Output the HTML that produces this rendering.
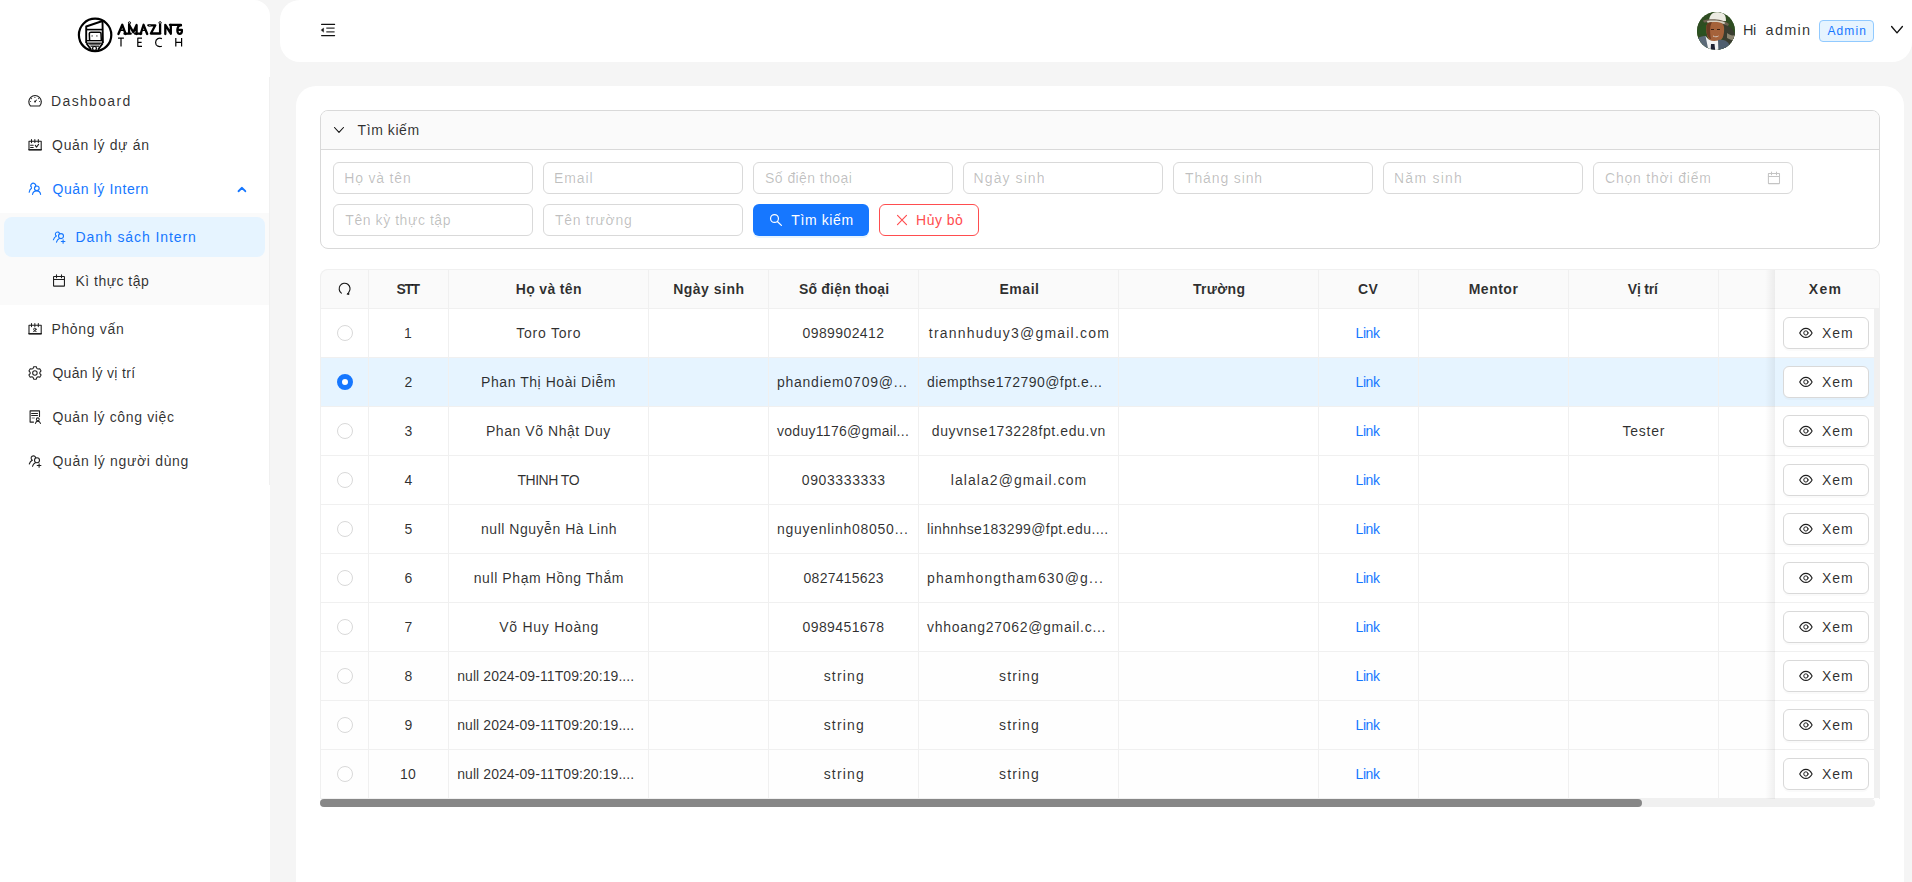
<!DOCTYPE html>
<html><head><meta charset="utf-8"><style>
*{box-sizing:border-box;margin:0;padding:0}
html,body{width:1912px;height:882px;overflow:hidden;background:#f5f5f5;font-family:"Liberation Sans",sans-serif;color:rgba(0,0,0,0.82);font-size:14px}
.abs{position:absolute}
.t{position:absolute;white-space:nowrap}
.vl{position:absolute;width:1px;background:#f0f0f0}
.hl{position:absolute;height:1px;background:#f0f0f0}
.inp{position:absolute;width:200px;height:32px;border:1px solid #d9d9d9;border-radius:6px;background:#fff}
.radio{position:absolute;left:337px;width:16px;height:16px;border-radius:50%;border:1px solid #d9d9d9;background:#fff}
.radio.on{border:5px solid #1677ff}
.xbtn{position:absolute;left:1783px;width:86px;height:32px;border:1px solid #d9d9d9;border-radius:6px;background:#fff;box-shadow:0 2px 0 rgba(0,0,0,0.02)}
</style></head><body>
<div class="abs" style="left:0;top:0;width:270px;height:882px;background:#fff;border-top-right-radius:16px"></div>
<div class="abs" style="left:269px;top:77px;width:1px;height:408px;background:#f0f0f0"></div>
<div class="abs" style="left:0;top:213px;width:269px;height:92px;background:#fafafa"></div>
<div class="abs" style="left:4px;top:217px;width:261px;height:40px;background:#e6f4ff;border-radius:8px"></div>
<svg class="abs" style="left:0;top:0" width="270" height="77" viewBox="0 0 270 77" fill="none" stroke="#000" stroke-linejoin="round">
<circle cx="95.1" cy="34.9" r="16.2" stroke-width="2.2"/>
<path d="M86.2 43 V26.5 L102.5 21 L102.9 43" stroke-width="1.9"/>
<path d="M86.2 29.6 H102.6" stroke-width="1.6"/>
<path d="M89.6 40.4 L89.3 33.6 C89.3 32.6 90 32.3 91 32.3 H99.6 C100.6 32.3 101 32.7 101 33.6 L101.3 40.4" stroke-width="1.5"/>
<circle cx="92.1" cy="35.9" r="0.6" fill="#000" stroke="none"/><circle cx="96.9" cy="35.9" r="0.6" fill="#000" stroke="none"/>
<path d="M86.6 40.7 H102.5 M86.6 43.1 H102.5" stroke-width="1.2"/>
<path d="M87 42 H102" stroke="#999" stroke-width="1.2"/>
<path d="M86.4 43.2 L91.2 49.8 M102.8 43.2 L98 49.8" stroke-width="1.8"/>
<path d="M89.3 44.1 H100.2 M90.5 46.1 H99" stroke-width="1.1"/>
<path d="M89.6 45.1 H99.8" stroke="#aaa" stroke-width="0.9"/>
<circle cx="94.5" cy="48.4" r="1.9" fill="#fff" stroke-width="1.2"/>
<g stroke-width="2.3" stroke-linecap="round">
<path d="M118.4 34 L122.3 24.8 L125.6 34"/>
<path d="M120.4 30.2 H124.2" stroke-width="1.4"/>
<path d="M124.5 33.7 H130.7 M129.1 33.7 V24.4"/>
<path d="M129.3 25.2 L133.3 32.3 L136.6 25 V34"/>
<path d="M135.1 33.7 H141.2"/>
<path d="M140.6 34 L143.6 24.8 L147.2 34"/>
<path d="M142.3 30.3 H145" stroke-width="1.2"/>
<path d="M148.3 25.3 H155.3 L150.9 33.5 H160.3 M160.1 33.7 V24.6"/>
<path d="M165.3 34 V24.8 L170.8 33.7 V24.8"/>
<path d="M169.9 24.8 H180.8"/>
<path d="M181 25.3 C176.6 24.9 176.4 33.9 179.4 33.9 C181.4 33.9 182.1 32.4 181.9 29.8 H179"/>
</g>
<circle cx="129.5" cy="22.8" r="1.05" fill="#fff" stroke-width="1"/>
<circle cx="160.1" cy="22.8" r="1.15" fill="#fff" stroke-width="1"/>
<circle cx="149.9" cy="25.4" r="0.9" fill="#fff" stroke-width="0.8"/>
<g stroke="#000" stroke-width="1.2" stroke-linecap="butt">
<path d="M118 38.1 H123.9 M121 38.1 V46.6"/>
<path d="M142 38.2 H137.8 V46.3 H142 M137.8 42.3 H141.6"/>
<path d="M161.9 38.6 C159.5 37.7 155.6 38.2 155.6 42.4 C155.6 46.6 159.5 47 161.9 46.2"/>
<path d="M175.8 38.1 V46.6 M181.6 38.1 V46.6 M175.8 42.3 H181.6"/>
</g>
</svg>
<svg class="abs" style="left:24px;top:90px" width="22" height="22" viewBox="0 0 22 22" fill="none" stroke-linecap="round" stroke-linejoin="round"><path d="M6.4 15.95 A6.25 6.25 0 1 1 15.74 15.95 Z" stroke="#1f1f1f" stroke-width="1.15"/><g fill="#1f1f1f"><circle cx="10.9" cy="7.4" r="0.55"/><circle cx="7.6" cy="8.6" r="0.55"/><circle cx="14.4" cy="8.6" r="0.55"/><circle cx="6.6" cy="11.5" r="0.55"/><circle cx="15.6" cy="11.5" r="0.55"/><circle cx="11.1" cy="11.5" r="0.95"/></g><path d="M11.1 11.5 L12.6 10.1" stroke="#1f1f1f" stroke-width="1"/></svg>
<svg class="abs" style="left:24px;top:134px" width="22" height="22" viewBox="0 0 22 22" fill="none" stroke-linecap="round" stroke-linejoin="round"><path d="M5.0 7.2 H17.2 V15.6 H5.0 Z" stroke="#1f1f1f" stroke-width="1.1"/><path d="M5 15.7 H17.2" stroke="#1f1f1f" stroke-width="1.5"/><path d="M7.5 5.4 V8.6 M10.85 5.6 V8.4 M14.3 5.4 V8.6 M6.6 11.2 H9.2 M6.6 13.4 H9.2 M11.3 11.4 L12.5 13.1 L14.6 10.4" stroke="#1f1f1f" stroke-width="1.05"/></svg>
<svg class="abs" style="left:24px;top:178px" width="22" height="22" viewBox="0 0 22 22" fill="none" stroke-linecap="round" stroke-linejoin="round"><path d="M11.3 9.0 A2.45 2.45 0 1 0 7.6 9.4" stroke="#1677ff" stroke-width="1.15"/><path d="M7.5 10.3 C6.3 11.1 5.4 12.5 5.2 14.2" stroke="#1677ff" stroke-width="1.15"/><circle cx="12.8" cy="10.3" r="2.35" stroke="#1677ff" stroke-width="1.15"/><path d="M8.5 16.4 C8.9 14.3 10.5 12.8 12.7 12.8 C14.9 12.8 16.3 14.3 16.6 16.4" stroke="#1677ff" stroke-width="1.15"/></svg>
<svg class="abs" style="left:49px;top:226px" width="22" height="22" viewBox="0 0 22 22" fill="none" stroke-linecap="round" stroke-linejoin="round"><path d="M10.6 7.6 A2.15 2.15 0 1 0 7.3 9.9" stroke="#1677ff" stroke-width="1.1"/><path d="M7.2 10.1 C6 11 4.9 12.3 4.4 13.8" stroke="#1677ff" stroke-width="1.1"/><circle cx="12.0" cy="10.1" r="2.5" stroke="#1677ff" stroke-width="1.1"/><path d="M10.4 12.6 C9 13.2 7.9 14.6 7.5 16.2" stroke="#1677ff" stroke-width="1.1"/><path d="M12.3 15.5 H15.9 M14.1 13.8 V17.2" stroke="#1677ff" stroke-width="1.1"/></svg>
<svg class="abs" style="left:49px;top:270px" width="22" height="22" viewBox="0 0 22 22" fill="none" stroke-linecap="round" stroke-linejoin="round"><rect x="4.55" y="6.5" width="10.9" height="9.65" rx="0.4" stroke="#1f1f1f" stroke-width="1.1"/><path d="M4.6 9.5 H15.4 M7.5 4.9 V7.7 M12.5 4.9 V7.7" stroke="#1f1f1f" stroke-width="1.1"/></svg>
<svg class="abs" style="left:24px;top:318px" width="22" height="22" viewBox="0 0 22 22" fill="none" stroke-linecap="round" stroke-linejoin="round"><path d="M5.0 7.2 H17.2 V15.6 H5.0 Z" stroke="#1f1f1f" stroke-width="1.1"/><path d="M5 15.7 H17.2" stroke="#1f1f1f" stroke-width="1.5"/><path d="M7.5 5.4 V8.6 M10.85 5.6 V8.4 M14.3 5.4 V8.6" stroke="#1f1f1f" stroke-width="1.05"/><circle cx="10.85" cy="11.3" r="1.2" stroke="#1f1f1f" stroke-width="0.95"/><path d="M9.3 13.7 C9.7 12.6 12 12.6 12.4 13.7" stroke="#1f1f1f" stroke-width="0.95"/></svg>
<svg class="abs" style="left:24px;top:362px" width="22" height="22" viewBox="0 0 22 22" fill="none" stroke-linecap="round" stroke-linejoin="round"><path d="M9.67 4.69 L12.33 4.69 L12.84 6.41 L14.02 7.09 L15.76 6.67 L17.09 8.97 L15.85 10.27 L15.85 11.63 L17.09 12.93 L15.76 15.23 L14.02 14.81 L12.84 15.49 L12.33 17.21 L9.67 17.21 L9.16 15.49 L7.98 14.81 L6.24 15.23 L4.91 12.93 L6.15 11.63 L6.15 10.27 L4.91 8.97 L6.24 6.67 L7.98 7.09 L9.16 6.41 Z" stroke="#1f1f1f" stroke-width="1.05"/><circle cx="10.9" cy="10.95" r="2.25" stroke="#1f1f1f" stroke-width="1.05"/></svg>
<svg class="abs" style="left:24px;top:406px" width="22" height="22" viewBox="0 0 22 22" fill="none" stroke-linecap="round" stroke-linejoin="round"><path d="M15.5 10.4 V4.9 H6.1 V16.1 H9.5" stroke="#1f1f1f" stroke-width="1.1"/><path d="M7.6 7.5 H13.5 M7.6 9.5 H13.5" stroke="#1f1f1f" stroke-width="1.05"/><path d="M8.1 12 H10.4" stroke="#777" stroke-width="1"/><circle cx="13.8" cy="13.3" r="1.45" stroke="#1f1f1f" stroke-width="1.05"/><path d="M11.4 17.4 C11.8 15.9 12.7 15.1 13.8 15.1 C14.9 15.1 15.9 15.9 16.5 17.4" stroke="#1f1f1f" stroke-width="1.05"/></svg>
<svg class="abs" style="left:24px;top:450px" width="22" height="22" viewBox="0 0 22 22" fill="none" stroke-linecap="round" stroke-linejoin="round"><path d="M11.6 7.8 A2.25 2.25 0 1 0 8.2 10.1" stroke="#1f1f1f" stroke-width="1.1"/><path d="M8.1 10.3 C6.9 11.1 5.8 12.4 5.3 14" stroke="#1f1f1f" stroke-width="1.1"/><circle cx="13.0" cy="10.2" r="2.5" stroke="#1f1f1f" stroke-width="1.1"/><path d="M11.4 12.7 C10 13.3 8.9 14.7 8.5 16.3" stroke="#1f1f1f" stroke-width="1.1"/><path d="M13.2 15.5 H16.9 M15.1 13.8 V17.2" stroke="#1f1f1f" stroke-width="1.1"/></svg>
<svg class="abs" style="left:231px;top:178px" width="22" height="22" viewBox="0 0 22 22" fill="none" stroke-linecap="round" stroke-linejoin="round"><path d="M7.5 13.2 L11 9.8 L14.3 13.2" stroke="#1677ff" stroke-width="1.9"/></svg>
<div class="abs" style="left:280px;top:0;width:1632px;height:62px;background:#fff;border-radius:20px 0 20px 20px"></div>
<svg class="abs" style="left:317px;top:19px" width="22" height="22" viewBox="0 0 22 22" fill="none" stroke-linecap="round" stroke-linejoin="round"><path d="M4.6 5.4 H17.6 M4.6 16.6 H17.6" stroke="#111" stroke-width="1.15"/><path d="M9.3 9.1 H17.6 M9.3 12.85 H17.6" stroke="#333" stroke-width="1.05" stroke-linecap="butt"/><path d="M4.2 10.9 L6.6 9.0 V12.9 Z" fill="#111" stroke="#111" stroke-width="0.4"/></svg>
<div class="abs" style="left:1697px;top:12px;width:38px;height:38px;border-radius:50%;overflow:hidden"><svg width="38" height="38" viewBox="3 3 38 38">
<rect x="0" y="0" width="44" height="44" fill="#3b5a2c"/>
<path d="M0 0 H44 V44 H0 Z" fill="#2f4d22"/>
<path d="M28 14 C34 16 40 20 42 28 L42 44 L30 44 Z" fill="#3a3d30"/>
<path d="M33 24 C36 26 38 27 41 26 L41 32 C37 31 35 30 33 29 Z" fill="#8a8470"/>
<path d="M4 20 C8 16 12 14 14 16 L12 26 C8 26 5 25 3 24 Z" fill="#2a5220"/>
<path d="M15 12 C15.5 6 18 3 24 3 C30 3 32 6 32 12 Z" fill="#ecebe2"/>
<path d="M9 11.5 C16 9.5 28 9.5 35 15 L34 17 C27 13.5 17 13 10 13.5 Z" fill="#6e6152"/>
<path d="M13 12 C18 11 27 11.5 31 13.5 L30.5 15 C26 13.5 18 13 13.5 13.8 Z" fill="#d8d2c4"/>
<path d="M12.5 17 C13 13.5 16 13 21 13 C26 13 29.5 14 30 18 C30.5 24 29.5 30 25 32.5 C21 34.5 16 33 14 29 C12.5 26 12 21 12.5 17 Z" fill="#a5623a"/>
<path d="M12.5 17 C13 14 15 13.3 18 13.2 C16 16 15.5 22 17 30 C15.5 30 14 28 13.2 26 C12.5 23 12.2 20 12.5 17 Z" fill="#6a3a22"/>
<path d="M17 20.5 H20 M23 20.5 H26" stroke="#3a2013" stroke-width="1"/>
<path d="M19 27 C21 28 23 28 24.5 27" stroke="#e8d0c0" stroke-width="1"/>
<path d="M3 44 V30 C6 27 10 27 12 27 L16 44 Z" fill="#5b6a78"/>
<path d="M24 31 C28 30 33 31 35 35 L36 44 H24 Z" fill="#4f5e6e"/>
<path d="M11.5 27 C14 31 18 33 24 31.5 L24.5 44 H15 Z" fill="#f2f2f2"/>
<path d="M17 35 L20.5 35 L21.5 44 H16.5 Z" fill="#1e2233"/>
</svg></div>
<div class="abs" style="left:1819px;top:20px;width:55px;height:22px;border:1px solid #91caff;background:#e6f4ff;border-radius:4px"></div>
<svg class="abs" style="left:1886px;top:19px" width="22" height="22" viewBox="0 0 22 22" fill="none" stroke-linecap="round" stroke-linejoin="round"><path d="M5.6 7.5 L11 13.9 L16.4 7.5" stroke="#111" stroke-width="1.35"/></svg>
<div class="abs" style="left:296px;top:86px;width:1608px;height:830px;background:#fff;border-radius:20px"></div>
<div class="abs" style="left:320px;top:110px;width:1560px;height:139px;border:1px solid #d9d9d9;border-radius:8px;overflow:hidden"><div class="abs" style="left:0;top:0;width:1558px;height:39px;background:#fafafa;border-bottom:1px solid #d9d9d9"></div></div>
<svg class="abs" style="left:328px;top:119px" width="22" height="22" viewBox="0 0 22 22" fill="none" stroke-linecap="round" stroke-linejoin="round"><path d="M6.5 8.5 L11 13.4 L15.5 8.5" stroke="#111" stroke-width="1.1"/></svg>
<div class="inp" style="left:333px;top:162px"></div>
<div class="inp" style="left:543px;top:162px"></div>
<div class="inp" style="left:753px;top:162px"></div>
<div class="inp" style="left:963px;top:162px"></div>
<div class="inp" style="left:1173px;top:162px"></div>
<div class="inp" style="left:1383px;top:162px"></div>
<div class="inp" style="left:1593px;top:162px"></div>
<div class="inp" style="left:333px;top:204px"></div>
<div class="inp" style="left:543px;top:204px"></div>
<svg class="abs" style="left:1763px;top:167px" width="22" height="22" viewBox="0 0 22 22" fill="none" stroke-linecap="round" stroke-linejoin="round"><rect x="5.4" y="6.4" width="11.1" height="10.2" rx="0.3" stroke="#c4c4c4" stroke-width="1.05"/><path d="M5.4 9.5 H16.5 M8.5 4.9 V7.7 M13.5 4.9 V7.7" stroke="#c4c4c4" stroke-width="1.05"/></svg>
<div class="abs" style="left:753px;top:204px;width:116px;height:32px;border-radius:6px;background:#1677ff;box-shadow:0 2px 0 rgba(5,145,255,0.1)"></div>
<svg class="abs" style="left:764px;top:209px" width="22" height="22" viewBox="0 0 22 22" fill="none" stroke-linecap="round" stroke-linejoin="round"><circle cx="10.5" cy="9.5" r="3.95" stroke="#fff" stroke-width="1.2"/><path d="M13.6 12.7 L17.4 16.4" stroke="#fff" stroke-width="1.25"/></svg>
<div class="abs" style="left:879px;top:204px;width:100px;height:32px;border-radius:6px;border:1px solid #ff4d4f;background:#fff"></div>
<svg class="abs" style="left:890px;top:209px" width="22" height="22" viewBox="0 0 22 22" fill="none" stroke-linecap="round" stroke-linejoin="round"><path d="M7.5 6.4 L16.5 15.6 M16.5 6.4 L7.5 15.6" stroke="#ff4d4f" stroke-width="1.15"/></svg>
<div class="abs" style="left:320px;top:269px;width:1560px;height:40px;background:#fafafa;border-radius:8px 8px 0 0"></div>
<div class="abs" style="left:320px;top:358px;width:1554px;height:49px;background:#e6f4ff"></div>
<div class="abs" style="left:320px;top:652px;width:1554px;height:146px;background:#fefefe"></div>
<svg class="abs" style="left:333px;top:278px" width="22" height="22" viewBox="0 0 22 22" fill="none" stroke-linecap="round" stroke-linejoin="round"><path d="M8.4 15.1 A5.45 5.45 0 1 1 16.0 13.9" stroke="#111" stroke-width="1.1"/><path d="M14.2 15.9 L15.6 14.3 L15.9 16.2 Z" fill="#111" stroke="#111" stroke-width="0.8"/></svg>
<div class="vl" style="left:368px;top:269px;height:530px"></div>
<div class="vl" style="left:448px;top:269px;height:530px"></div>
<div class="vl" style="left:648px;top:269px;height:530px"></div>
<div class="vl" style="left:768px;top:269px;height:530px"></div>
<div class="vl" style="left:918px;top:269px;height:530px"></div>
<div class="vl" style="left:1118px;top:269px;height:530px"></div>
<div class="vl" style="left:1318px;top:269px;height:530px"></div>
<div class="vl" style="left:1418px;top:269px;height:530px"></div>
<div class="vl" style="left:1568px;top:269px;height:530px"></div>
<div class="vl" style="left:1718px;top:269px;height:530px"></div>
<div class="hl" style="left:320px;top:308px;width:1560px"></div>
<div class="hl" style="left:320px;top:357px;width:1554px"></div>
<div class="hl" style="left:320px;top:406px;width:1554px"></div>
<div class="hl" style="left:320px;top:455px;width:1554px"></div>
<div class="hl" style="left:320px;top:504px;width:1554px"></div>
<div class="hl" style="left:320px;top:553px;width:1554px"></div>
<div class="hl" style="left:320px;top:602px;width:1554px"></div>
<div class="hl" style="left:320px;top:651px;width:1554px"></div>
<div class="hl" style="left:320px;top:700px;width:1554px"></div>
<div class="hl" style="left:320px;top:749px;width:1554px"></div>
<div class="hl" style="left:320px;top:798px;width:1554px"></div>
<div class="radio" style="top:325px"></div>
<div class="radio on" style="top:374px"></div>
<div class="radio" style="top:423px"></div>
<div class="radio" style="top:472px"></div>
<div class="radio" style="top:521px"></div>
<div class="radio" style="top:570px"></div>
<div class="radio" style="top:619px"></div>
<div class="radio" style="top:668px"></div>
<div class="radio" style="top:717px"></div>
<div class="radio" style="top:766px"></div>
<div class="abs" style="left:1765px;top:269px;width:10px;height:530px;background:linear-gradient(to left,rgba(5,5,5,0.06),rgba(5,5,5,0))"></div>
<div class="abs" style="left:1775px;top:269px;width:105px;height:40px;background:#fafafa;border-top-right-radius:8px"></div>
<div class="hl" style="left:1775px;top:308px;width:105px"></div>
<div class="abs" style="left:1775px;top:309px;width:99px;height:48px;background:#fff"></div>
<div class="hl" style="left:1775px;top:357px;width:99px"></div>
<div class="xbtn" style="top:317px"></div>
<svg class="abs" style="left:1795px;top:322px" width="22" height="22" viewBox="0 0 22 22" fill="none" stroke-linecap="round" stroke-linejoin="round"><path d="M4.7 10.95 C6.4 7.6 8.6 6.35 10.9 6.35 C13.2 6.35 15.4 7.6 17.1 10.95 C15.4 14.3 13.2 15.4 10.9 15.4 C8.6 15.4 6.4 14.3 4.7 10.95 Z" stroke="#1f1f1f" stroke-width="1.1"/><circle cx="10.9" cy="10.95" r="2.15" stroke="#1f1f1f" stroke-width="1.0"/></svg>
<div class="abs" style="left:1775px;top:358px;width:99px;height:48px;background:#e6f4ff"></div>
<div class="hl" style="left:1775px;top:406px;width:99px"></div>
<div class="xbtn" style="top:366px"></div>
<svg class="abs" style="left:1795px;top:371px" width="22" height="22" viewBox="0 0 22 22" fill="none" stroke-linecap="round" stroke-linejoin="round"><path d="M4.7 10.95 C6.4 7.6 8.6 6.35 10.9 6.35 C13.2 6.35 15.4 7.6 17.1 10.95 C15.4 14.3 13.2 15.4 10.9 15.4 C8.6 15.4 6.4 14.3 4.7 10.95 Z" stroke="#1f1f1f" stroke-width="1.1"/><circle cx="10.9" cy="10.95" r="2.15" stroke="#1f1f1f" stroke-width="1.0"/></svg>
<div class="abs" style="left:1775px;top:407px;width:99px;height:48px;background:#fff"></div>
<div class="hl" style="left:1775px;top:455px;width:99px"></div>
<div class="xbtn" style="top:415px"></div>
<svg class="abs" style="left:1795px;top:420px" width="22" height="22" viewBox="0 0 22 22" fill="none" stroke-linecap="round" stroke-linejoin="round"><path d="M4.7 10.95 C6.4 7.6 8.6 6.35 10.9 6.35 C13.2 6.35 15.4 7.6 17.1 10.95 C15.4 14.3 13.2 15.4 10.9 15.4 C8.6 15.4 6.4 14.3 4.7 10.95 Z" stroke="#1f1f1f" stroke-width="1.1"/><circle cx="10.9" cy="10.95" r="2.15" stroke="#1f1f1f" stroke-width="1.0"/></svg>
<div class="abs" style="left:1775px;top:456px;width:99px;height:48px;background:#fff"></div>
<div class="hl" style="left:1775px;top:504px;width:99px"></div>
<div class="xbtn" style="top:464px"></div>
<svg class="abs" style="left:1795px;top:469px" width="22" height="22" viewBox="0 0 22 22" fill="none" stroke-linecap="round" stroke-linejoin="round"><path d="M4.7 10.95 C6.4 7.6 8.6 6.35 10.9 6.35 C13.2 6.35 15.4 7.6 17.1 10.95 C15.4 14.3 13.2 15.4 10.9 15.4 C8.6 15.4 6.4 14.3 4.7 10.95 Z" stroke="#1f1f1f" stroke-width="1.1"/><circle cx="10.9" cy="10.95" r="2.15" stroke="#1f1f1f" stroke-width="1.0"/></svg>
<div class="abs" style="left:1775px;top:505px;width:99px;height:48px;background:#fff"></div>
<div class="hl" style="left:1775px;top:553px;width:99px"></div>
<div class="xbtn" style="top:513px"></div>
<svg class="abs" style="left:1795px;top:518px" width="22" height="22" viewBox="0 0 22 22" fill="none" stroke-linecap="round" stroke-linejoin="round"><path d="M4.7 10.95 C6.4 7.6 8.6 6.35 10.9 6.35 C13.2 6.35 15.4 7.6 17.1 10.95 C15.4 14.3 13.2 15.4 10.9 15.4 C8.6 15.4 6.4 14.3 4.7 10.95 Z" stroke="#1f1f1f" stroke-width="1.1"/><circle cx="10.9" cy="10.95" r="2.15" stroke="#1f1f1f" stroke-width="1.0"/></svg>
<div class="abs" style="left:1775px;top:554px;width:99px;height:48px;background:#fff"></div>
<div class="hl" style="left:1775px;top:602px;width:99px"></div>
<div class="xbtn" style="top:562px"></div>
<svg class="abs" style="left:1795px;top:567px" width="22" height="22" viewBox="0 0 22 22" fill="none" stroke-linecap="round" stroke-linejoin="round"><path d="M4.7 10.95 C6.4 7.6 8.6 6.35 10.9 6.35 C13.2 6.35 15.4 7.6 17.1 10.95 C15.4 14.3 13.2 15.4 10.9 15.4 C8.6 15.4 6.4 14.3 4.7 10.95 Z" stroke="#1f1f1f" stroke-width="1.1"/><circle cx="10.9" cy="10.95" r="2.15" stroke="#1f1f1f" stroke-width="1.0"/></svg>
<div class="abs" style="left:1775px;top:603px;width:99px;height:48px;background:#fff"></div>
<div class="hl" style="left:1775px;top:651px;width:99px"></div>
<div class="xbtn" style="top:611px"></div>
<svg class="abs" style="left:1795px;top:616px" width="22" height="22" viewBox="0 0 22 22" fill="none" stroke-linecap="round" stroke-linejoin="round"><path d="M4.7 10.95 C6.4 7.6 8.6 6.35 10.9 6.35 C13.2 6.35 15.4 7.6 17.1 10.95 C15.4 14.3 13.2 15.4 10.9 15.4 C8.6 15.4 6.4 14.3 4.7 10.95 Z" stroke="#1f1f1f" stroke-width="1.1"/><circle cx="10.9" cy="10.95" r="2.15" stroke="#1f1f1f" stroke-width="1.0"/></svg>
<div class="abs" style="left:1775px;top:652px;width:99px;height:48px;background:#fff"></div>
<div class="hl" style="left:1775px;top:700px;width:99px"></div>
<div class="xbtn" style="top:660px"></div>
<svg class="abs" style="left:1795px;top:665px" width="22" height="22" viewBox="0 0 22 22" fill="none" stroke-linecap="round" stroke-linejoin="round"><path d="M4.7 10.95 C6.4 7.6 8.6 6.35 10.9 6.35 C13.2 6.35 15.4 7.6 17.1 10.95 C15.4 14.3 13.2 15.4 10.9 15.4 C8.6 15.4 6.4 14.3 4.7 10.95 Z" stroke="#1f1f1f" stroke-width="1.1"/><circle cx="10.9" cy="10.95" r="2.15" stroke="#1f1f1f" stroke-width="1.0"/></svg>
<div class="abs" style="left:1775px;top:701px;width:99px;height:48px;background:#fff"></div>
<div class="hl" style="left:1775px;top:749px;width:99px"></div>
<div class="xbtn" style="top:709px"></div>
<svg class="abs" style="left:1795px;top:714px" width="22" height="22" viewBox="0 0 22 22" fill="none" stroke-linecap="round" stroke-linejoin="round"><path d="M4.7 10.95 C6.4 7.6 8.6 6.35 10.9 6.35 C13.2 6.35 15.4 7.6 17.1 10.95 C15.4 14.3 13.2 15.4 10.9 15.4 C8.6 15.4 6.4 14.3 4.7 10.95 Z" stroke="#1f1f1f" stroke-width="1.1"/><circle cx="10.9" cy="10.95" r="2.15" stroke="#1f1f1f" stroke-width="1.0"/></svg>
<div class="abs" style="left:1775px;top:750px;width:99px;height:48px;background:#fff"></div>
<div class="hl" style="left:1775px;top:798px;width:99px"></div>
<div class="xbtn" style="top:758px"></div>
<svg class="abs" style="left:1795px;top:763px" width="22" height="22" viewBox="0 0 22 22" fill="none" stroke-linecap="round" stroke-linejoin="round"><path d="M4.7 10.95 C6.4 7.6 8.6 6.35 10.9 6.35 C13.2 6.35 15.4 7.6 17.1 10.95 C15.4 14.3 13.2 15.4 10.9 15.4 C8.6 15.4 6.4 14.3 4.7 10.95 Z" stroke="#1f1f1f" stroke-width="1.1"/><circle cx="10.9" cy="10.95" r="2.15" stroke="#1f1f1f" stroke-width="1.0"/></svg>
<div class="abs" style="left:1874px;top:309px;width:6px;height:489px;background:#f0f0f0"></div>
<div class="abs" style="left:320px;top:269px;width:1560px;height:530px;border-top:1px solid #f0f0f0;border-left:1px solid #f0f0f0;border-right:1px solid #f0f0f0;border-radius:8px 8px 0 0"></div>
<div class="abs" style="left:320px;top:799px;width:1555px;height:8px;background:#f0f0f0;border-radius:4px"></div>
<div class="abs" style="left:320px;top:799px;width:1322px;height:8px;background:#878787;border-radius:4px"></div>
<span class="t" style="left:51.10px;top:94.15px;font-size:14px;line-height:14px;letter-spacing:1.337px">Dashboard</span>
<span class="t" style="left:52.10px;top:138.15px;font-size:14px;line-height:14px;letter-spacing:0.677px">Quản lý dự án</span>
<span class="t" style="left:52.40px;top:182.15px;font-size:14px;line-height:14px;letter-spacing:0.619px;color:#1677ff">Quản lý Intern</span>
<span class="t" style="left:75.50px;top:230.15px;font-size:14px;line-height:14px;letter-spacing:0.911px;color:#1677ff">Danh sách Intern</span>
<span class="t" style="left:75.50px;top:274.15px;font-size:14px;line-height:14px;letter-spacing:0.477px">Kì thực tập</span>
<span class="t" style="left:51.40px;top:322.15px;font-size:14px;line-height:14px;letter-spacing:0.680px">Phỏng vấn</span>
<span class="t" style="left:52.40px;top:366.15px;font-size:14px;line-height:14px;letter-spacing:0.316px">Quản lý vị trí</span>
<span class="t" style="left:52.40px;top:410.15px;font-size:14px;line-height:14px;letter-spacing:0.645px">Quản lý công việc</span>
<span class="t" style="left:52.40px;top:454.15px;font-size:14px;line-height:14px;letter-spacing:0.681px">Quản lý người dùng</span>
<span class="t" style="left:1743.00px;top:22.83px;font-size:14.5px;line-height:14.5px;letter-spacing:-0.471px">Hi</span>
<span class="t" style="left:1765.60px;top:22.83px;font-size:14.5px;line-height:14.5px;letter-spacing:1.243px">admin</span>
<span class="t" style="left:1827.50px;top:24.94px;font-size:12px;line-height:12px;letter-spacing:1.090px;color:#1677ff">Admin</span>
<span class="t" style="left:357.60px;top:123.15px;font-size:14px;line-height:14px;letter-spacing:0.559px">Tìm kiếm</span>
<span class="t" style="left:344.30px;top:171.15px;font-size:14px;line-height:14px;letter-spacing:0.808px;color:rgba(0,0,0,0.25)">Họ và tên</span>
<span class="t" style="left:554.00px;top:171.15px;font-size:14px;line-height:14px;letter-spacing:0.876px;color:rgba(0,0,0,0.25)">Email</span>
<span class="t" style="left:765.10px;top:171.15px;font-size:14px;line-height:14px;letter-spacing:0.423px;color:rgba(0,0,0,0.25)">Số điện thoại</span>
<span class="t" style="left:973.60px;top:171.15px;font-size:14px;line-height:14px;letter-spacing:1.079px;color:rgba(0,0,0,0.25)">Ngày sinh</span>
<span class="t" style="left:1185.00px;top:171.15px;font-size:14px;line-height:14px;letter-spacing:0.869px;color:rgba(0,0,0,0.25)">Tháng sinh</span>
<span class="t" style="left:1394.00px;top:171.15px;font-size:14px;line-height:14px;letter-spacing:1.251px;color:rgba(0,0,0,0.25)">Năm sinh</span>
<span class="t" style="left:1605.00px;top:171.15px;font-size:14px;line-height:14px;letter-spacing:0.793px;color:rgba(0,0,0,0.25)">Chọn thời điểm</span>
<span class="t" style="left:345.30px;top:213.15px;font-size:14px;line-height:14px;letter-spacing:0.563px;color:rgba(0,0,0,0.25)">Tên kỳ thực tập</span>
<span class="t" style="left:555.00px;top:213.15px;font-size:14px;line-height:14px;letter-spacing:0.666px;color:rgba(0,0,0,0.25)">Tên trường</span>
<span class="t" style="left:791.30px;top:213.15px;font-size:14px;line-height:14px;letter-spacing:0.616px;color:#fff">Tìm kiếm</span>
<span class="t" style="left:916.10px;top:213.15px;font-size:14px;line-height:14px;letter-spacing:0.466px;color:#ff4d4f">Hủy bỏ</span>
<span class="t" style="left:396.60px;top:282.15px;font-size:14px;line-height:14px;letter-spacing:-1.545px;font-weight:bold">STT</span>
<span class="t" style="left:515.70px;top:282.15px;font-size:14px;line-height:14px;letter-spacing:0.355px;font-weight:bold">Họ và tên</span>
<span class="t" style="left:673.20px;top:282.15px;font-size:14px;line-height:14px;letter-spacing:0.494px;font-weight:bold">Ngày sinh</span>
<span class="t" style="left:799.00px;top:282.15px;font-size:14px;line-height:14px;letter-spacing:0.192px;font-weight:bold">Số điện thoại</span>
<span class="t" style="left:999.50px;top:282.15px;font-size:14px;line-height:14px;letter-spacing:0.535px;font-weight:bold">Email</span>
<span class="t" style="left:1192.90px;top:282.15px;font-size:14px;line-height:14px;letter-spacing:0.326px;font-weight:bold">Trường</span>
<span class="t" style="left:1358.00px;top:282.15px;font-size:14px;line-height:14px;letter-spacing:0.490px;font-weight:bold">CV</span>
<span class="t" style="left:1468.70px;top:282.15px;font-size:14px;line-height:14px;letter-spacing:0.497px;font-weight:bold">Mentor</span>
<span class="t" style="left:1627.80px;top:282.15px;font-size:14px;line-height:14px;letter-spacing:-0.186px;font-weight:bold">Vị trí</span>
<span class="t" style="left:1808.80px;top:282.15px;font-size:14px;line-height:14px;letter-spacing:1.338px;font-weight:bold">Xem</span>
<span class="t" style="left:404.00px;top:325.95px;font-size:14px;line-height:14px">1</span>
<span class="t" style="left:516.20px;top:325.95px;font-size:14px;line-height:14px;letter-spacing:0.778px">Toro Toro</span>
<span class="t" style="left:802.50px;top:325.95px;font-size:14px;line-height:14px;letter-spacing:0.403px">0989902412</span>
<span class="t" style="left:928.80px;top:325.95px;font-size:14px;line-height:14px;letter-spacing:1.211px">trannhuduy3@gmail.com</span>
<span class="t" style="left:1355.50px;top:325.95px;font-size:14px;line-height:14px;letter-spacing:-0.394px;color:#1677ff">Link</span>
<span class="t" style="left:1821.90px;top:325.95px;font-size:14px;line-height:14px;letter-spacing:0.938px">Xem</span>
<span class="t" style="left:404.50px;top:374.95px;font-size:14px;line-height:14px">2</span>
<span class="t" style="left:481.10px;top:374.95px;font-size:14px;line-height:14px;letter-spacing:0.546px">Phan Thị Hoài Diễm</span>
<span class="t" style="left:776.90px;top:374.95px;font-size:14px;line-height:14px;letter-spacing:0.772px">phandiem0709@...</span>
<span class="t" style="left:927.00px;top:374.95px;font-size:14px;line-height:14px;letter-spacing:0.455px">diempthse172790@fpt.e...</span>
<span class="t" style="left:1355.50px;top:374.95px;font-size:14px;line-height:14px;letter-spacing:-0.394px;color:#1677ff">Link</span>
<span class="t" style="left:1821.90px;top:374.95px;font-size:14px;line-height:14px;letter-spacing:0.938px">Xem</span>
<span class="t" style="left:404.50px;top:423.95px;font-size:14px;line-height:14px">3</span>
<span class="t" style="left:485.90px;top:423.95px;font-size:14px;line-height:14px;letter-spacing:0.563px">Phan Võ Nhật Duy</span>
<span class="t" style="left:776.90px;top:423.95px;font-size:14px;line-height:14px;letter-spacing:0.305px">voduy1176@gmail...</span>
<span class="t" style="left:931.80px;top:423.95px;font-size:14px;line-height:14px;letter-spacing:0.602px">duyvnse173228fpt.edu.vn</span>
<span class="t" style="left:1355.50px;top:423.95px;font-size:14px;line-height:14px;letter-spacing:-0.394px;color:#1677ff">Link</span>
<span class="t" style="left:1622.50px;top:423.95px;font-size:14px;line-height:14px;letter-spacing:0.768px">Tester</span>
<span class="t" style="left:1821.90px;top:423.95px;font-size:14px;line-height:14px;letter-spacing:0.938px">Xem</span>
<span class="t" style="left:404.50px;top:472.95px;font-size:14px;line-height:14px">4</span>
<span class="t" style="left:517.60px;top:472.95px;font-size:14px;line-height:14px;letter-spacing:-0.523px">THINH TO</span>
<span class="t" style="left:801.80px;top:472.95px;font-size:14px;line-height:14px;letter-spacing:0.603px">0903333333</span>
<span class="t" style="left:950.80px;top:472.95px;font-size:14px;line-height:14px;letter-spacing:1.061px">lalala2@gmail.com</span>
<span class="t" style="left:1355.50px;top:472.95px;font-size:14px;line-height:14px;letter-spacing:-0.394px;color:#1677ff">Link</span>
<span class="t" style="left:1821.90px;top:472.95px;font-size:14px;line-height:14px;letter-spacing:0.938px">Xem</span>
<span class="t" style="left:404.50px;top:521.95px;font-size:14px;line-height:14px">5</span>
<span class="t" style="left:481.00px;top:521.95px;font-size:14px;line-height:14px;letter-spacing:0.528px">null Nguyễn Hà Linh</span>
<span class="t" style="left:776.90px;top:521.95px;font-size:14px;line-height:14px;letter-spacing:0.739px">nguyenlinh08050...</span>
<span class="t" style="left:927.00px;top:521.95px;font-size:14px;line-height:14px;letter-spacing:0.386px">linhnhse183299@fpt.edu....</span>
<span class="t" style="left:1355.50px;top:521.95px;font-size:14px;line-height:14px;letter-spacing:-0.394px;color:#1677ff">Link</span>
<span class="t" style="left:1821.90px;top:521.95px;font-size:14px;line-height:14px;letter-spacing:0.938px">Xem</span>
<span class="t" style="left:404.50px;top:570.95px;font-size:14px;line-height:14px">6</span>
<span class="t" style="left:473.70px;top:570.95px;font-size:14px;line-height:14px;letter-spacing:0.599px">null Phạm Hồng Thắm</span>
<span class="t" style="left:803.60px;top:570.95px;font-size:14px;line-height:14px;letter-spacing:0.236px">0827415623</span>
<span class="t" style="left:927.00px;top:570.95px;font-size:14px;line-height:14px;letter-spacing:1.136px">phamhongtham630@g...</span>
<span class="t" style="left:1355.50px;top:570.95px;font-size:14px;line-height:14px;letter-spacing:-0.394px;color:#1677ff">Link</span>
<span class="t" style="left:1821.90px;top:570.95px;font-size:14px;line-height:14px;letter-spacing:0.938px">Xem</span>
<span class="t" style="left:404.50px;top:619.95px;font-size:14px;line-height:14px">7</span>
<span class="t" style="left:499.30px;top:619.95px;font-size:14px;line-height:14px;letter-spacing:0.721px">Võ Huy Hoàng</span>
<span class="t" style="left:802.50px;top:619.95px;font-size:14px;line-height:14px;letter-spacing:0.403px">0989451678</span>
<span class="t" style="left:927.00px;top:619.95px;font-size:14px;line-height:14px;letter-spacing:0.710px">vhhoang27062@gmail.c...</span>
<span class="t" style="left:1355.50px;top:619.95px;font-size:14px;line-height:14px;letter-spacing:-0.394px;color:#1677ff">Link</span>
<span class="t" style="left:1821.90px;top:619.95px;font-size:14px;line-height:14px;letter-spacing:0.938px">Xem</span>
<span class="t" style="left:404.50px;top:668.95px;font-size:14px;line-height:14px">8</span>
<span class="t" style="left:457.20px;top:668.95px;font-size:14px;line-height:14px;letter-spacing:0.079px">null 2024-09-11T09:20:19....</span>
<span class="t" style="left:823.70px;top:668.95px;font-size:14px;line-height:14px;letter-spacing:1.150px">string</span>
<span class="t" style="left:999.10px;top:668.95px;font-size:14px;line-height:14px;letter-spacing:1.090px">string</span>
<span class="t" style="left:1355.50px;top:668.95px;font-size:14px;line-height:14px;letter-spacing:-0.394px;color:#1677ff">Link</span>
<span class="t" style="left:1821.90px;top:668.95px;font-size:14px;line-height:14px;letter-spacing:0.938px">Xem</span>
<span class="t" style="left:404.50px;top:717.95px;font-size:14px;line-height:14px">9</span>
<span class="t" style="left:457.20px;top:717.95px;font-size:14px;line-height:14px;letter-spacing:0.079px">null 2024-09-11T09:20:19....</span>
<span class="t" style="left:823.70px;top:717.95px;font-size:14px;line-height:14px;letter-spacing:1.150px">string</span>
<span class="t" style="left:999.10px;top:717.95px;font-size:14px;line-height:14px;letter-spacing:1.090px">string</span>
<span class="t" style="left:1355.50px;top:717.95px;font-size:14px;line-height:14px;letter-spacing:-0.394px;color:#1677ff">Link</span>
<span class="t" style="left:1821.90px;top:717.95px;font-size:14px;line-height:14px;letter-spacing:0.938px">Xem</span>
<span class="t" style="left:400.11px;top:766.95px;font-size:14px;line-height:14px">10</span>
<span class="t" style="left:457.20px;top:766.95px;font-size:14px;line-height:14px;letter-spacing:0.079px">null 2024-09-11T09:20:19....</span>
<span class="t" style="left:823.70px;top:766.95px;font-size:14px;line-height:14px;letter-spacing:1.150px">string</span>
<span class="t" style="left:999.10px;top:766.95px;font-size:14px;line-height:14px;letter-spacing:1.090px">string</span>
<span class="t" style="left:1355.50px;top:766.95px;font-size:14px;line-height:14px;letter-spacing:-0.394px;color:#1677ff">Link</span>
<span class="t" style="left:1821.90px;top:766.95px;font-size:14px;line-height:14px;letter-spacing:0.938px">Xem</span>
</body></html>
